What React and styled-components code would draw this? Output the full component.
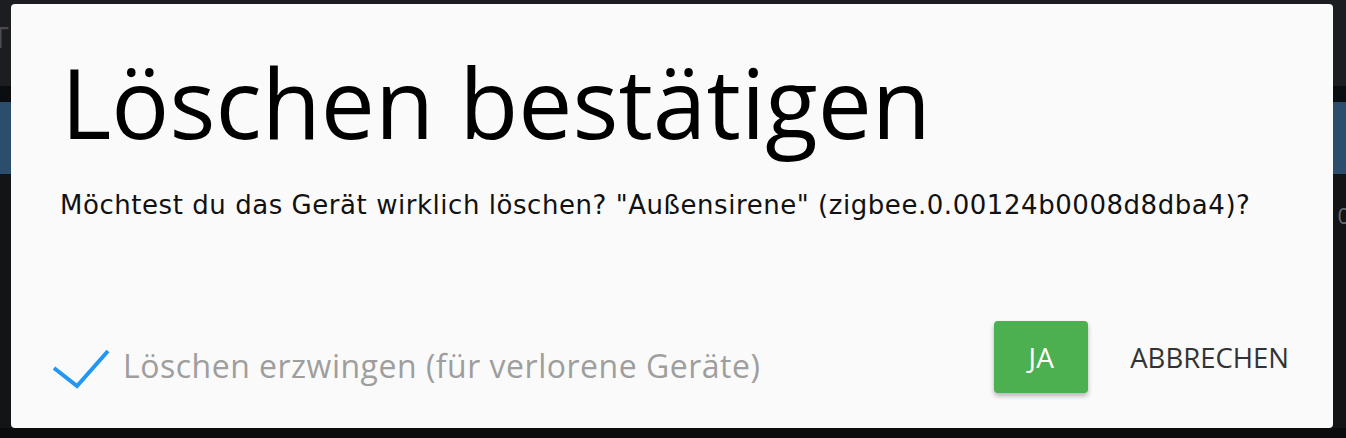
import React from 'react'
import styled, { createGlobalStyle } from 'styled-components'

const GlobalStyle = createGlobalStyle`
    html, body {
        margin: 0;
        padding: 0;
        background: #121416;
        overflow: hidden;
    }
    #root {
        width: 1346px;
        height: 438px;
    }
`

function App() {
    return (
        <Page>
            <GlobalStyle />
            <Backdrop>
                <TopBar>
                    <BarText>T</BarText>
                </TopBar>
                <Divider />
                <BlueBand />
                <Content>
                    <SideValue>0</SideValue>
                </Content>
                <BottomEdge />
            </Backdrop>
            <Dialog>
                <Title>Löschen bestätigen</Title>
                <Message>
                    Möchtest du das Gerät wirklich löschen? "Außensirene" (zigbee.0.00124b0008d8dba4)?
                </Message>
                <Footer>
                    <CheckRow>
                        <CheckMark viewBox="0 0 58 40">
                            <path d="M2 19 L25 37 L56 2" />
                        </CheckMark>
                        <CheckLabel>Löschen erzwingen (für verlorene Geräte)</CheckLabel>
                    </CheckRow>
                    <Actions>
                        <PrimaryButton>JA</PrimaryButton>
                        <FlatButton>ABBRECHEN</FlatButton>
                    </Actions>
                </Footer>
            </Dialog>
        </Page>
    )
}

export default App

const Page = styled.div`
    position: relative;
    width: 1346px;
    height: 438px;
    overflow: hidden;
    font-family: "Open Sans", "Noto Sans", sans-serif;
`

const Backdrop = styled.div`
    display: grid;
    grid-template-rows: 86px 16px 72px 1fr 10px;
    height: 100%;
`

const TopBar = styled.div`
    background: #1b1d20;
    display: flex;
    align-items: center;
`

const BarText = styled.span`
    color: #4a4c50;
    font-size: 30px;
    margin-left: -8px;
    margin-top: -14px;
`

const Divider = styled.div`
    background: #0b0e11;
`

const BlueBand = styled.div`
    background: #2c4e6d;
`

const Content = styled.div`
    background: #121416;
    display: flex;
    justify-content: flex-end;
    padding-top: 26px;
`

const SideValue = styled.span`
    color: #6b6d70;
    font-size: 22px;
    margin-right: -4px;
`

const BottomEdge = styled.div`
    background: #090b0d;
`

const Dialog = styled.div`
    position: absolute;
    left: 11px;
    top: 4px;
    width: 1322px;
    height: 424px;
    box-sizing: border-box;
    background: #fafafa;
    border-radius: 4px;
    padding: 40px 28px 35px 41px;
    display: flex;
    flex-direction: column;
`

const Title = styled.h1`
    margin: 0 0 0 9px;
    font-size: 96.5px;
    font-weight: 400;
    line-height: 115px;
    color: #000;
`

const Message = styled.p`
    margin: 28px 0 0 8px;
    font-family: "DejaVu Sans", "Open Sans", sans-serif;
    font-size: 26px;
    line-height: 36px;
    letter-spacing: 0.55px;
    color: #111;
`

const Footer = styled.div`
    margin-top: auto;
    display: flex;
    justify-content: space-between;
    align-items: flex-end;
`

const CheckRow = styled.label`
    display: flex;
    align-items: center;
    gap: 13px;
    margin-bottom: 4px;
`

const CheckMark = styled.svg`
    width: 58px;
    height: 40px;
    margin-top: 6px;
    fill: none;
    stroke: #2196f3;
    stroke-width: 4;
`

const CheckLabel = styled.span`
    font-size: 32px;
    line-height: 40px;
    letter-spacing: 0.5px;
    color: #9e9e9e;
`

const Actions = styled.div`
    display: flex;
    align-items: center;
    gap: 26px;
`

const PrimaryButton = styled.button`
    width: 94px;
    height: 72px;
    border: none;
    border-radius: 4px;
    background: #4caf50;
    color: #fff;
    font-family: inherit;
    font-size: 28px;
    box-shadow: 0 3px 5px rgba(0, 0, 0, 0.28);
    padding: 0;
`

const FlatButton = styled.button`
    height: 72px;
    border: none;
    background: transparent;
    color: #333;
    font-family: inherit;
    font-size: 27.5px;
    padding: 0 16px;
`
